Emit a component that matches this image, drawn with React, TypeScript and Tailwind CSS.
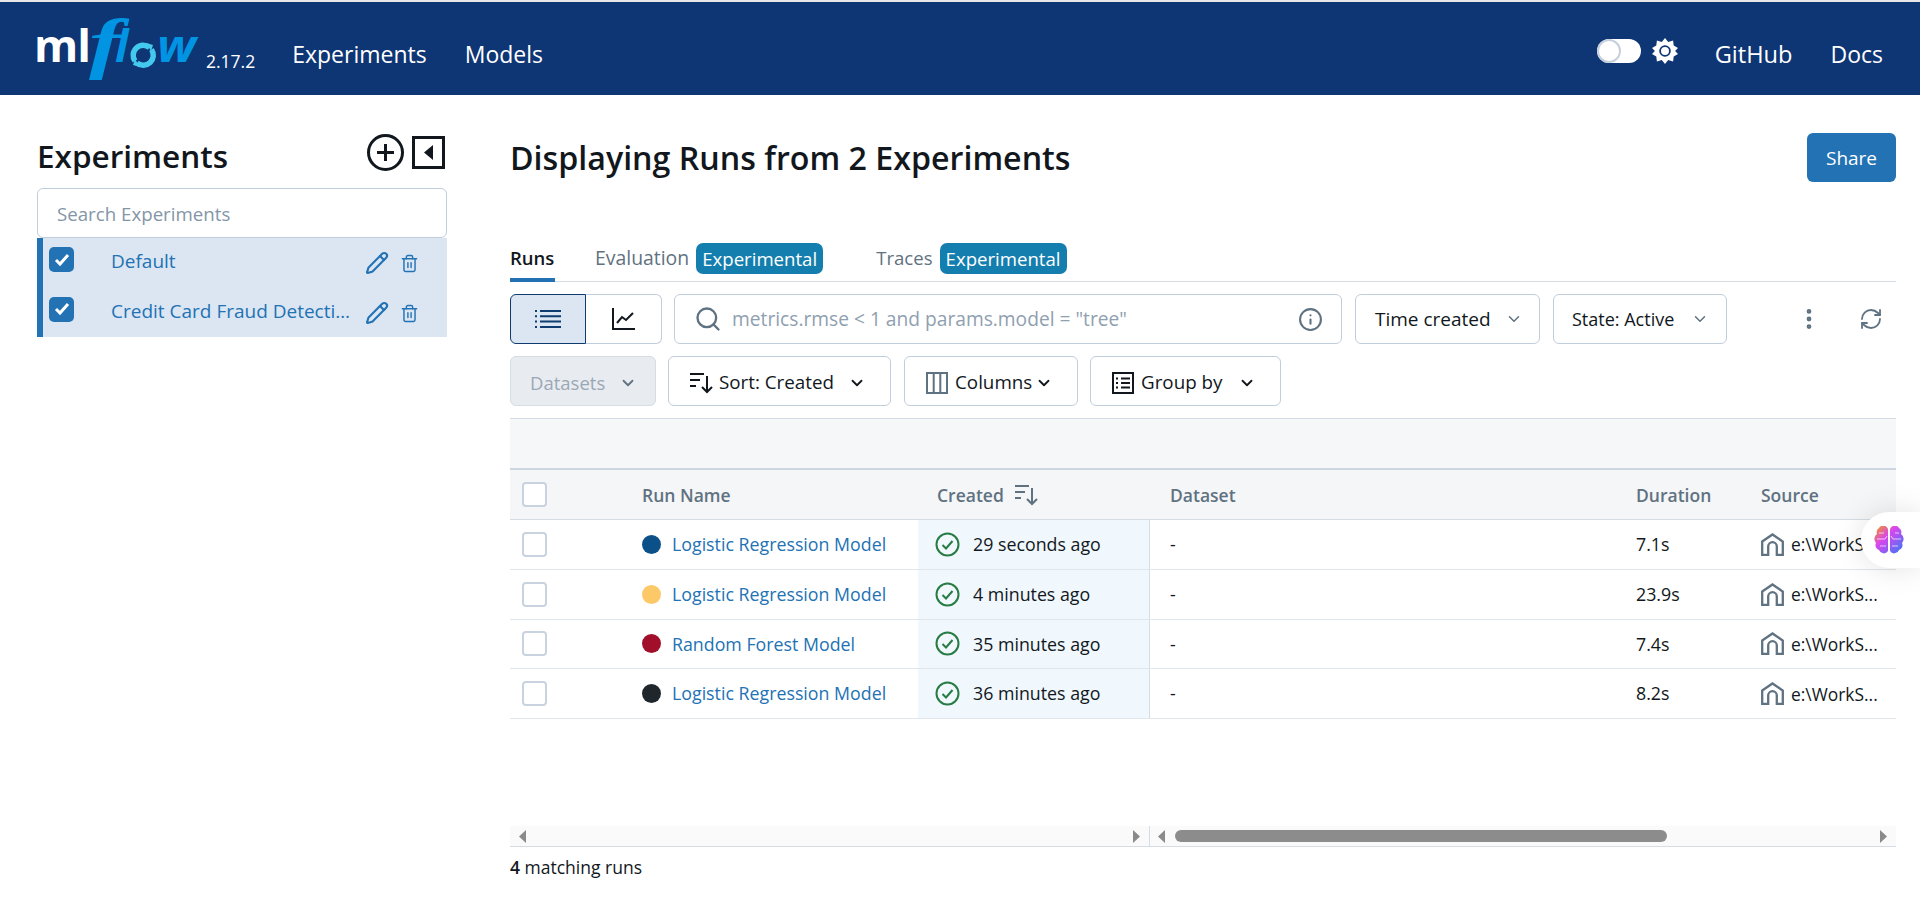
import { ChevronDown, EllipsisVertical, Info, Pencil, RefreshCw, Search, Trash2 } from "lucide-react";

const Sun = () => (
  <svg width="26" height="26" viewBox="0 0 26 26" aria-hidden="true">
    <path
      fillRule="evenodd"
      fill="#fff"
      d="M13 0l3.200 4 4.900-1.600.6 5.100 4.300 2.500-2.900 3 2.900 3-4.300 2.500-.6 5.100-4.900-1.600-3.200 4-3.200-4-4.900 1.600-.6-5.100L0 16l2.900-3L0 10l4.300-2.500.6-5.100L9.800 4zM13 7.200a5.800 5.800 0 1 0 0 11.600 5.800 5.800 0 0 0 0-11.600zM13 9a4 4 0 1 1 0 8 4 4 0 0 1 0-8z"
    />
  </svg>
);

const SortIcon = ({ color }: { color: string }) => (
  <svg width="24" height="22" viewBox="0 0 24 22" fill="none" stroke={color} strokeWidth="2" aria-hidden="true">
    <path d="M1 2h14M1 8h10M1 14h6M18 4v16M13 15l5 5 5-5" />
  </svg>
);

const Check = () => (
  <span className="w-[25px] h-[25px] rounded-[5px] bg-[#2272b4] flex items-center justify-center shrink-0">
    <svg width="16" height="14" viewBox="0 0 16 14" fill="none" stroke="#fff" strokeWidth="3" aria-hidden="true">
      <path d="M2 7l4 4 8-9" />
    </svg>
  </span>
);

const EmptyBox = () => <span className="block w-[25px] h-[25px] rounded-[4px] border-2 border-[#c8d3df] bg-white" />;

const ExperimentRow = ({ name }: { name: string }) => (
  <div className="h-[49.500px] flex items-start pl-[6px]">
    <span className="ml-[6px] mr-[37px] mt-[9px]"><Check /></span>
    <span className="w-[240px] truncate text-[#2272b4] text-[19px] leading-[26px] mt-[10px]">{name}</span>
    <Pencil size={24} strokeWidth={2.1} className="text-[#2272b4] ml-[14px] mt-[13px] shrink-0" />
    <Trash2 size={19} strokeWidth={1.8} className="text-[#2272b4] ml-[11px] mt-[16px] shrink-0" />
  </div>
);

const Badge = () => (
  <span className="ml-[7px] h-[31px] w-[127px] text-center rounded-[7px] bg-[#147eae] text-white text-[18.600px] leading-[31px]">Experimental</span>
);

const OutlineButton = ({ className, children }: { className: string; children: React.ReactNode }) => (
  <div className={`h-[50px] border border-[#c0cddb] rounded-[6px] flex items-center text-[18.800px] text-[#11171c] shrink-0 ${className}`}>{children}</div>
);

const HomeIcon = () => (
  <svg width="23" height="23" viewBox="0 0 23 23" fill="none" stroke="#5f7281" strokeWidth="2.300" className="shrink-0" aria-hidden="true">
    <path d="M1.200 8.500L11.500 1.500l10.300 7V22h-6V13.500a4.300 4.300 0 0 0-8.600 0V22h-6z" />
  </svg>
);

const CheckCircle = () => (
  <svg width="25" height="25" viewBox="0 0 25 25" fill="none" stroke="#277c43" strokeWidth="2" className="shrink-0" aria-hidden="true">
    <circle cx="12.500" cy="12.500" r="11" />
    <path d="M7.500 13l3.500 3.500 6.500-7.500" />
  </svg>
);

const runs = [
  { color: "#0b5088", name: "Logistic Regression Model", time: "29 seconds ago", dur: "7.1s" },
  { color: "#fdc868", name: "Logistic Regression Model", time: "4 minutes ago", dur: "23.9s" },
  { color: "#a10f2b", name: "Random Forest Model", time: "35 minutes ago", dur: "7.4s" },
  { color: "#1f272d", name: "Logistic Regression Model", time: "36 minutes ago", dur: "8.2s" },
];

const Arrow = ({ right }: { right?: boolean }) => (
  <svg width="7" height="13" viewBox="0 0 7 13" fill="#8a8a8a" className="shrink-0" aria-hidden="true">
    <path d={right ? "M0 0l7 6.500L0 13z" : "M7 0L0 6.500 7 13z"} />
  </svg>
);

const gridCols = "grid grid-cols-[118px_290px_232px_472px_125px_149px]";

export default function App() {
  return (
    <div className="relative h-[904px] overflow-hidden bg-white border-t-2 border-[#e6e6e6] font-['Open_Sans','Noto_Sans',sans-serif] text-[#11171c]">
      <header className="h-[93px] bg-[#0e3574] flex items-center text-white pl-[37px] pr-[37px]">
        <div className="relative w-[169px] h-[93px] shrink-0">
          <span className="absolute -left-[3px] top-[11px] text-[45px] leading-[64px] font-bold tracking-[-1px]">ml</span>
          <span className="absolute left-[52px] top-[3px] text-[67px] leading-[77px] text-[#0194e2] font-bold italic font-['Liberation_Serif',serif] scale-x-[1.45] origin-left">f</span>
          <span className="absolute left-[78px] top-[11px] text-[45px] leading-[64px] text-[#0194e2] font-bold italic">l</span>
          <svg width="30" height="30" viewBox="0 0 30 30" fill="none" stroke="#43c9ed" strokeWidth="5.500" className="absolute left-[91px] top-[38px]" aria-hidden="true">
            <path d="M21.500 7.500A10 10 0 0 0 7 21" />
            <path d="M9 23A10 10 0 0 0 23.500 9.500" />
            <path d="M18 3l7 2-2 6zM12 27l-7-2 2-6z" fill="#43c9ed" stroke="none" />
          </svg>
          <span className="absolute left-[120px] top-[11px] text-[45px] leading-[64px] text-[#0194e2] font-bold italic scale-x-[1.1] origin-left">w</span>
        </div>
        <span className="text-[17.500px] mt-[26px] shrink-0">2.17.2</span>
        <nav className="flex gap-[38px] ml-[37px] mt-[12px] text-[23px]">
          <span>Experiments</span>
          <span>Models</span>
        </nav>
        <div className="ml-auto mt-[12px] flex items-center text-[23px]">
          <div className="relative w-[44px] h-[24px] rounded-full bg-white -mt-[6px]">
            <span className="absolute left-0 top-0 w-[24px] h-[24px] rounded-full bg-white border-2 border-[#c5d0dc]" />
          </div>
          <span className="ml-[11px] -mt-[6px]"><Sun /></span>
          <span className="ml-[37px] text-[23.600px]">GitHub</span>
          <span className="ml-[38px]">Docs</span>
        </div>
      </header>

      <div className="flex">
        <aside className="w-[510px] shrink-0 pl-[37px] pr-[63px] pt-[39px]">
          <div className="flex items-center justify-between h-[37px] mb-[17px]">
            <h2 className="text-[31.500px] leading-[37px] font-semibold mt-[5px]">Experiments</h2>
            <div className="flex items-center gap-[8px]">
              <svg width="37" height="37" viewBox="0 0 37 37" fill="none" stroke="#11171c" strokeWidth="3" aria-hidden="true">
                <circle cx="18.500" cy="18.500" r="17" />
                <path d="M18.500 10v17M10 18.500h17" />
              </svg>
              <svg width="33" height="33" viewBox="0 0 33 33" fill="none" className="mr-[2px]" aria-hidden="true">
                <rect x="1.500" y="1.500" width="30" height="30" stroke="#11171c" strokeWidth="3" />
                <path d="M21 9v15l-9-7.500z" fill="#11171c" />
              </svg>
            </div>
          </div>
          <div className="h-[50px] border border-[#c0cddb] rounded-[6px] flex items-center pl-[19px] pt-[2px] text-[18.700px] text-[#8396a8]">Search Experiments</div>
          <div className="bg-[#dbe6f2] border-l-[6px] border-[#2272b4]">
            <div className="-ml-[6px]">
              <ExperimentRow name="Default" />
              <ExperimentRow name="Credit Card Fraud Detection" />
            </div>
          </div>
        </aside>

        <main className="w-[1386px] shrink-0 pt-[38px]">
          <div className="flex items-start justify-between h-[110px]">
            <h1 className="text-[32.200px] leading-[50px] font-semibold">Displaying Runs from 2 Experiments</h1>
            <div className="w-[89px] h-[49px] rounded-[6px] bg-[#2272b4] text-white text-[19px] pt-[2px] flex items-center justify-center">Share</div>
          </div>
          <div className="flex items-start h-[39px] border-b border-[#d4dce6] text-[19.400px] leading-[30px]">
            <div className="h-[39px] border-b-[4px] border-[#2272b4] font-semibold w-[45px] text-[18.500px]">Runs</div>
            <div className="flex ml-[40px] text-[#5f7281]"><span>Evaluation</span><Badge /></div>
            <div className="flex ml-[53px] text-[#5f7281]"><span className="text-[18.600px]">Traces</span><Badge /></div>
          </div>

          <div className="flex items-center mt-[12px]">
            <div className="w-[76px] h-[50px] bg-[#dbe6f2] border border-[#0e3b70] rounded-l-[6px] flex items-center justify-center">
              <svg width="26" height="20" viewBox="0 0 26 20" fill="none" stroke="#0e3b70" strokeWidth="2" aria-hidden="true">
                <path d="M5 2h21M5 7.300h21M5 12.600h21M5 18h21M0 2h2M0 7.300h2M0 12.600h2M0 18h2" />
              </svg>
            </div>
            <div className="w-[76px] h-[50px] border border-l-0 border-[#c0cddb] rounded-r-[6px] flex items-center justify-center">
              <svg width="23" height="22" viewBox="0 0 23 22" fill="none" stroke="#11171c" strokeWidth="2" aria-hidden="true">
                <path d="M1 0v21h22M5 15l5-6 4 3 7-7" />
              </svg>
            </div>
            <OutlineButton className="w-[668px] ml-[12px] pl-[19px] pr-[18px]">
              <Search size={28} strokeWidth={2} className="text-[#5f7281] shrink-0" />
              <span className="ml-[10px] text-[#8fa0b0] text-[19.200px]">metrics.rmse &lt; 1 and params.model = "tree"</span>
              <Info size={25} strokeWidth={2} className="ml-auto text-[#5f7281] shrink-0" />
            </OutlineButton>
            <OutlineButton className="w-[185px] ml-[13px] pl-[19px] pr-[16px] justify-between">
              <span className="text-[19px]">Time created</span>
              <ChevronDown size={18} strokeWidth={2} className="text-[#5f7281]" />
            </OutlineButton>
            <OutlineButton className="w-[174px] ml-[13px] pl-[18px] pr-[17px] justify-between">
              <span className="text-[18px]">State: Active</span>
              <ChevronDown size={18} strokeWidth={2} className="text-[#5f7281]" />
            </OutlineButton>
            <EllipsisVertical size={26} strokeWidth={2.4} className="ml-[69px] text-[#5f7281]" />
            <RefreshCw size={24} strokeWidth={1.8} className="ml-[37px] text-[#5f7281]" />
          </div>

          <div className="flex items-center mt-[12px]">
            <div className="w-[146px] h-[50px] rounded-[6px] border border-[#d5dce4] bg-[#e8ebef] flex items-center pl-[19px] pt-[3px] text-[18.500px] text-[#9aa8b6]">
              <span>Datasets</span>
              <ChevronDown size={18} strokeWidth={2.4} className="text-[#5f7281] ml-[14px]" />
            </div>
            <OutlineButton className="w-[223px] ml-[12px] pl-[20px] pt-[3px]">
              <SortIcon color="#11171c" />
              <span className="ml-[6px]">Sort: Created</span>
              <ChevronDown size={18} strokeWidth={2.4} className="ml-[14px]" />
            </OutlineButton>
            <OutlineButton className="w-[174px] ml-[13px] pl-[21px] pt-[3px]">
              <svg width="22" height="22" viewBox="0 0 22 22" fill="none" stroke="#5f7281" strokeWidth="2" className="shrink-0" aria-hidden="true">
                <path d="M1 1h20v20H1zM7.700 1v20M14.300 1v20" />
              </svg>
              <span className="ml-[7px]">Columns</span>
              <ChevronDown size={18} strokeWidth={2.4} className="ml-[3px]" />
            </OutlineButton>
            <OutlineButton className="w-[191px] ml-[12px] pl-[21px] pt-[3px]">
              <svg width="22" height="22" viewBox="0 0 22 22" fill="none" stroke="#11171c" strokeWidth="2" className="shrink-0" aria-hidden="true">
                <path d="M1 1h20v20H1zM9 6.500h9M9 11h9M9 15.500h9M4 6.500h2M4 11h2M4 15.500h2" />
              </svg>
              <span className="ml-[7px]">Group by</span>
              <ChevronDown size={18} strokeWidth={2.4} className="ml-[16px]" />
            </OutlineButton>
          </div>

          <div className="mt-[12px] h-[52px] bg-[#f6f7f9] border-t border-b-[2px] border-t-[#d4dce6] border-b-[#cdd6e0]" />
          <div className={`${gridCols} h-[50px] items-center bg-[#f5f6f8] border-b border-[#d4dce6] text-[17.500px] font-semibold text-[#5f7281]`}>
            <div className="pl-[12px]"><EmptyBox /></div>
            <div className="pl-[14px] pt-[1px]">Run Name</div>
            <div className="pl-[19px] pt-[1px] flex items-center gap-[10px]"><span>Created</span><SortIcon color="#5f7281" /></div>
            <div className="pl-[20px] pt-[1px]">Dataset</div>
            <div className="pl-[14px] pt-[1px]">Duration</div>
            <div className="pl-[14px] pt-[1px]">Source</div>
          </div>
          {runs.map((r, i) => (
            <div key={i} className={`${gridCols} h-[49.750px] items-stretch border-b border-[#e0e6ec] text-[17.800px]`}>
              <div className="pl-[12px] flex items-center"><EmptyBox /></div>
              <div className="pl-[14px] flex items-center">
                <span className="w-[19px] h-[19px] rounded-full shrink-0" style={{ backgroundColor: r.color }} />
                <span className="ml-[11px] text-[#2272b4] whitespace-nowrap">{r.name}</span>
              </div>
              <div className="pl-[17px] flex items-center bg-[#f0f7fd] border-r border-[#d4dce6]">
                <CheckCircle />
                <span className="ml-[13px] whitespace-nowrap">{r.time}</span>
              </div>
              <div className="pl-[20px] flex items-center">-</div>
              <div className="pl-[14px] flex items-center">{r.dur}</div>
              <div className="pl-[14px] flex items-center">
                <HomeIcon />
                <span className="ml-[7px] whitespace-nowrap text-[17.400px]">e:\WorkS...</span>
              </div>
            </div>
          ))}

          <div className="mt-[107px] flex h-[21px] border-b border-[#d4dce6]">
            <div className="w-[640px] bg-[#fafafa] border-r border-[#d4dce6] flex items-center justify-between px-[9px]">
              <Arrow />
              <Arrow right />
            </div>
            <div className="flex-1 bg-[#fafafa] flex items-center pl-[8px] pr-[9px]">
              <Arrow />
              <div className="ml-[10px] w-[492px] h-[12px] rounded-full bg-[#8c8c8c]" />
              <span className="ml-auto"><Arrow right /></span>
            </div>
          </div>
          <div className="mt-[7px] text-[17.500px]"><span className="font-semibold">4</span> matching runs</div>
        </main>
      </div>

      <div className="absolute right-0 top-[510px] w-[59px] h-[56px] bg-white rounded-l-[28px] shadow-[0_0_30px_rgba(0,0,0,0.12)] flex items-center pl-[13px]">
        <svg width="30" height="28" viewBox="0 0 30 28" aria-hidden="true">
          <defs>
            <linearGradient id="brain" x1="0" y1="0" x2="1" y2="1">
              <stop offset="0" stopColor="#f59e0b" />
              <stop offset="0.4" stopColor="#d946ef" />
              <stop offset="1" stopColor="#2f7bf6" />
            </linearGradient>
          </defs>
          <path fill="url(#brain)" d="M14 3a5 5 0 0 0-9-1 5 5 0 0 0-2 6 6 6 0 0 0-1 9 5 5 0 0 0 3 7 5 5 0 0 0 9 1zM16 3a5 5 0 0 1 9-1 5 5 0 0 1 2 6 6 6 0 0 1 1 9 5 5 0 0 1-3 7 5 5 0 0 1-9 1z" />
          <path fill="none" stroke="#fff" strokeOpacity="0.7" d="M3 13h8l2-3M5 7h5M6 20h6M27 13h-8l-2-3M25 7h-4M24 20h-6" />
        </svg>
      </div>
    </div>
  );
}
